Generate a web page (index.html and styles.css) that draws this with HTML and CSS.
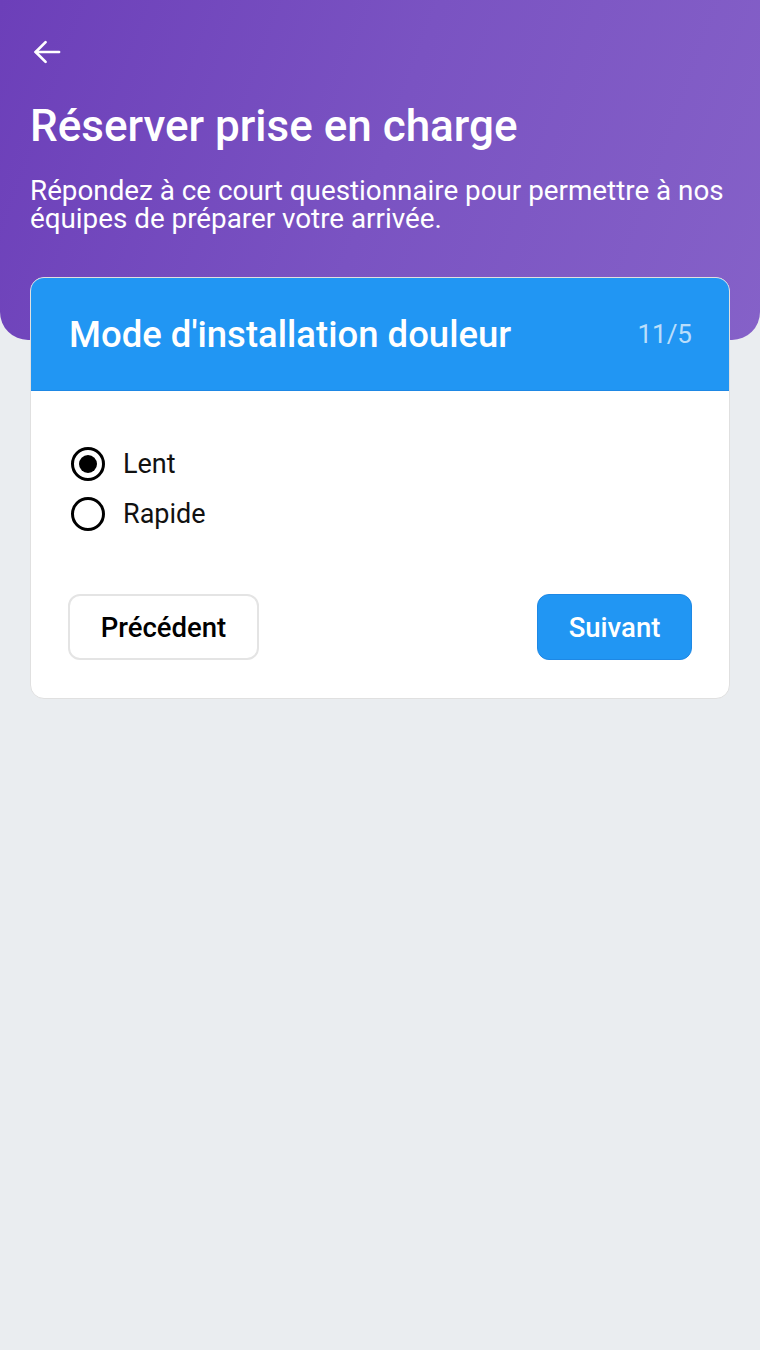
FILE: index.html
```html
<!DOCTYPE html>
<html lang="fr">
<head>
    <meta charset="UTF-8">
    <meta name="viewport" content="width=device-width, initial-scale=1.0">
    <title>Réserver prise en charge</title>
    <link rel="stylesheet" href="styles.css">
</head>
<body>
    <header class="hero">
        <button class="back-btn" aria-label="Retour">
            <svg width="34" height="34" viewBox="0 0 24 24" fill="none" stroke="#fff" stroke-width="1.9" stroke-linecap="round" stroke-linejoin="round">
                <path d="M20.5 12H4"/>
                <path d="M11 5l-7 7 7 7"/>
            </svg>
        </button>
        <h1>Réserver prise en charge</h1>
        <p>Répondez à ce court questionnaire pour permettre à nos équipes de préparer votre arrivée.</p>
    </header>

    <main class="container">
        <div class="card">
            <div class="card-head">
                <h2>Mode d'installation douleur</h2>
                <span class="step">11/5</span>
            </div>
            <div class="card-body">
                <div class="options">
                    <label class="option">
                        <input type="radio" name="mode" checked>
                        <span class="dot"></span>
                        Lent
                    </label>
                    <label class="option">
                        <input type="radio" name="mode">
                        <span class="dot"></span>
                        Rapide
                    </label>
                </div>
                <div class="actions">
                    <button class="btn btn-prev">Précédent</button>
                    <button class="btn btn-next">Suivant</button>
                </div>
            </div>
        </div>
    </main>
</body>
</html>
```

FILE: styles.css
```css
* {
    box-sizing: border-box;
}
body {
    margin: 0;
    background: #eaedf0;
    font-family: Roboto, "Noto Sans", sans-serif;
    min-height: 1350px;
}
.hero {
    height: 340px;
    padding: 35px 28px 0 30px;
    background: linear-gradient(110deg, #6c3fb9 0%, #7a53c2 50%, #8561c8 100%);
    border-radius: 0 0 28px 28px;
    color: white;
}
.back-btn {
    display: block;
    padding: 0;
    margin: 0;
    background: none;
    border: none;
    width: 34px;
    height: 34px;
}
.hero h1 {
    margin: 31px 0 0;
    font-size: 44px;
    font-weight: 500;
    line-height: 53px;
}
.hero p {
    margin: 24px 0 0;
    font-size: 27.8px;
    line-height: 28px;
}
.container {
    padding: 0 30px;
    margin-top: -63px;
}
.card {
    background: white;
    border: 1px solid #e0e0e0;
    border-radius: 14px;
    overflow: hidden;
}
.card-head {
    display: flex;
    justify-content: space-between;
    align-items: center;
    height: 113px;
    padding: 0 37px 0 38px;
    background: #2196f3;
    border-bottom: 1px solid #1e88e5;
    color: white;
}
.card-head h2 {
    margin: 0;
    font-size: 36.5px;
    font-weight: 500;
}
.step {
    font-size: 26px;
    color: rgba(255,255,255,0.7);
}
.card-body {
    padding: 56px 37px 38px;
}
.options {
    display: flex;
    flex-direction: column;
    gap: 16px;
}
.option {
    display: flex;
    align-items: center;
    gap: 18px;
    font-size: 27px;
    color: #111;
    height: 34px;
    padding-left: 3px;
}
.option input {
    display: none;
}
.dot {
    width: 34px;
    height: 34px;
    border: 3px solid #000;
    border-radius: 50%;
    display: flex;
    align-items: center;
    justify-content: center;
}
.option input:checked + .dot::after {
    content: "";
    width: 18px;
    height: 18px;
    border-radius: 50%;
    background: #000;
}
.actions {
    display: flex;
    justify-content: space-between;
    margin-top: 63px;
}
.btn {
    height: 66px;
    border-radius: 12px;
    font-family: inherit;
    font-size: 27.5px;
    font-weight: 500;
    cursor: pointer;
}
.btn-prev {
    width: 191px;
    background: white;
    border: 2px solid #e4e4e4;
    color: #000;
}
.btn-next {
    width: 155px;
    background: #2196f3;
    border: 1px solid #1e88e5;
    color: white;
}
```
